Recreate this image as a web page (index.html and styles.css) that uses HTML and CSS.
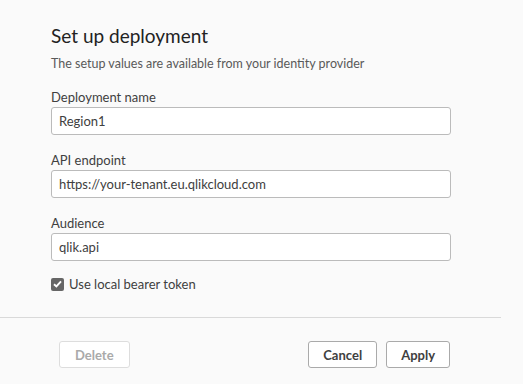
FILE: index.html
```html
<!DOCTYPE html>
<html lang="en">
<head>
    <meta charset="UTF-8">
    <meta name="viewport" content="width=device-width, initial-scale=1.0">
    <title>Set up deployment</title>
    <link rel="stylesheet" href="styles.css">
</head>
<body>
    <div class="dialog">
        <div class="dialog-body">
            <h1>Set up deployment</h1>
            <p class="subtitle">The setup values are available from your identity provider</p>

            <div class="field">
                <label for="name">Deployment name</label>
                <input type="text" id="name" value="Region1">
            </div>
            <div class="field">
                <label for="endpoint">API endpoint</label>
                <input type="text" id="endpoint" value="https://your-tenant.eu.qlikcloud.com">
            </div>
            <div class="field">
                <label for="audience">Audience</label>
                <input type="text" id="audience" value="qlik.api">
            </div>

            <div class="check-row">
                <span class="check-box">
                    <svg width="9" height="8" viewBox="0 0 9 8"><path d="M1 4.2 L3.4 6.5 L8 1.3" fill="none" stroke="#fff" stroke-width="1.9"/></svg>
                </span>
                <span class="check-label">Use local bearer token</span>
            </div>
        </div>

        <div class="divider"></div>

        <!-- Footer buttons -->
        <div class="actions">
            <button type="button" class="btn btn-disabled">Delete</button>
            <div class="actions-right">
                <button type="button" class="btn">Cancel</button>
                <button type="button" class="btn">Apply</button>
            </div>
        </div>
    </div>
</body>
</html>
```

FILE: styles.css
```css
* { margin: 0; padding: 0; box-sizing: border-box; }
body { font-family: Lato, "Noto Sans", sans-serif; background-color: #fafafa; color: #404040; }
.dialog { width: 523px; height: 384px; }
.dialog-body { width: 451px; padding: 24px 0 0 51px; }
h1 { font-size: 19px; line-height: 24px; font-weight: 400; color: #222; }
.subtitle { font-size: 12.5px; line-height: 18px; margin: 7px 0 16px; color: #595959; }
.field + .field { margin-top: 17px; }
.field label { display: block; font-size: 13px; line-height: 16px; margin-bottom: 2px; color: #404040; }
.field input { display: block; width: 100%; height: 28px; padding: 0 7px; border: 1px solid #bbb; border-radius: 3px; background: #fff; font-family: inherit; font-size: 13px; color: #404040; outline: none; }
.check-row { display: flex; align-items: center; gap: 5px; margin-top: 14px; }
.check-box { width: 13px; height: 13px; border-radius: 2px; background-color: #666; display: flex; justify-content: center; align-items: center; }
.check-label { font-size: 13px; line-height: 18px; color: #404040; }
.divider { width: 501px; border-top: 1px solid #d9d9d9; margin-top: 24px; }
.actions { display: flex; justify-content: space-between; padding: 23px 73px 0 59px; }
.actions-right { display: flex; gap: 9px; }
.btn { height: 27px; padding: 0 14px; background-color: #fff; border: 1px solid #aaa; border-radius: 3px; font-family: inherit; font-size: 13px; font-weight: 700; color: #404040; }
.btn-disabled { border-color: #ddd; color: #aaa; padding: 0 15px; }
```
